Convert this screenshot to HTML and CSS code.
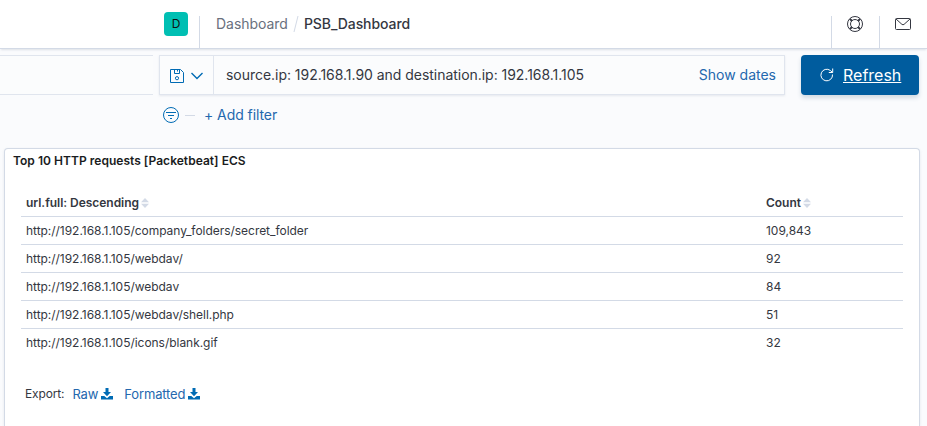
FILE: index.html
```html
<!DOCTYPE html>
<html lang="en">
<head>
<meta charset="utf-8">
<title>PSB_Dashboard</title>
<link rel="stylesheet" href="styles.css">
</head>
<body>
<header class="header">
  <div class="space"><span class="avatar">D</span></div>
  <nav class="crumbs"><span class="crumb">Dashboard</span><svg class="slash" width="6" height="18" viewBox="0 0 6 18"><path d="M5 1 1 17"/></svg><span class="crumb current">PSB_Dashboard</span></nav>
  <div class="action">
    <svg class="icon" width="16" height="16" viewBox="0 0 16 16"><circle cx="8" cy="8" r="7.5"/><circle cx="8" cy="8" r="4.500"/><path class="spokes" d="M2.900 2.900 5 5M13.100 2.900 11 5M2.900 13.100 5 11M13.100 13.100 11 11"/></svg>
  </div>
  <div class="action">
    <svg class="icon" width="16" height="16" viewBox="0 0 16 16"><rect x=".5" y="2.5" width="15" height="11" rx="1"/><path d="m1 3 5.9 5.3a1.6 1.6 0 0 0 2.2 0L15 3"/></svg>
  </div>
</header>
<section class="query">
  <div class="field-end"></div>
  <div class="search">
    <button class="saved">
      <svg class="icon" width="16" height="16" viewBox="0 0 16 16"><path d="M1.5 1.5h10l3 3v10h-13zM5.500 1.500v4h5v-4M8.500 1.500v2"/><circle cx="8" cy="10.200" r="1.600"/></svg>
      <svg class="icon" width="14" height="8" viewBox="0 0 14 8"><path class="chevron" d="m1.500 1 5.500 5.500L12.500 1"/></svg>
    </button>
    <div class="kql"><span>source.ip: 192.168.1.90 and destination.ip: 192.168.1.105</span></div>
    <a class="dates">Show dates</a>
  </div>
  <button class="refresh">
    <svg class="icon" width="14" height="14" viewBox="0 0 14 14"><path d="M12.500 6.500a5.800 5.800 0 1 1-2.300-4.100l2.300 2M12.700.5v4H8.800"/></svg>
    <span>Refresh</span>
  </button>
</section>
<div class="filters">
  <svg class="icon" width="16" height="16" viewBox="0 0 16 16"><circle cx="8" cy="8" r="7.500"/><path d="M3 5.500h10M5 8.500h6M7 11.500h2"/></svg>
  <span class="dash"></span>
  <a class="add">+ Add filter</a>
</div>
<main class="panel">
  <h2 class="title"><span>Top 10 HTTP requests [Packetbeat] ECS</span></h2>
  <table class="table">
    <thead><tr>
      <th class="url"><span>url.full: Descending</span><svg class="sort" width="8" height="10" viewBox="0 0 8 10"><path d="M0 4.200 4 0l4 4.200zM0 5.800 4 10l4-4.200z"/></svg></th>
      <th><span>Count</span><svg class="sort" width="8" height="10" viewBox="0 0 8 10"><path d="M0 4.200 4 0l4 4.200zM0 5.800 4 10l4-4.200z"/></svg></th>
    </tr></thead>
    <tbody>
      <tr><td>http://192.168.1.105/company_folders/secret_folder</td><td>109,843</td></tr>
      <tr><td>http://192.168.1.105/webdav/</td><td>92</td></tr>
      <tr><td>http://192.168.1.105/webdav</td><td>84</td></tr>
      <tr><td>http://192.168.1.105/webdav/shell.php</td><td>51</td></tr>
      <tr><td>http://192.168.1.105/icons/blank.gif</td><td>32</td></tr>
    </tbody>
  </table>
  <div class="export">
    <span class="label">Export:</span>
    <a class="raw">Raw</a><svg class="download" width="12" height="12" viewBox="0 0 12 12"><path d="M4.500 0h3v4H10L6 8.300 2 4h2.500zM0 8h3.300L6 10.200 8.700 8H12v3.500H0z"/></svg>
    <a class="formatted">Formatted</a><svg class="download" width="12" height="12" viewBox="0 0 12 12"><path d="M4.500 0h3v4H10L6 8.300 2 4h2.500zM0 8h3.300L6 10.200 8.700 8H12v3.500H0z"/></svg>
  </div>
</main>
</body>
</html>
```
FILE: styles.css
```css
* { box-sizing: border-box; }
html { overflow: hidden; }
body {
  margin: 0;
  height: 426px;
  overflow: hidden;
  display: flex;
  flex-direction: column;
  background: #fafbfd;
  color: #343741;
  font: 14px/20px Inter, "Liberation Sans", sans-serif;
  letter-spacing: -.035px;
  white-space: nowrap;
}
svg { display: block; flex: none; }
button { border: 0; padding: 0; background: none; font: inherit; color: inherit; }
.icon { fill: none; stroke: currentColor; stroke-width: 1; }
.spokes { stroke-width: 2; }
.header {
  flex: none;
  display: flex;
  align-items: flex-end;
  height: 49px;
  background: #fff;
  border-bottom: 1px solid #d3dae6;
  box-shadow: 0 2px 2px -1px rgba(152, 162, 179, .3);
}
.space { width: 200px; height: 32px; border-right: 1px solid #d3dae6; }
.avatar {
  display: block;
  width: 24px;
  height: 24px;
  margin: -4px 0 0 164px;
  border-radius: 4px;
  background: #00bfb3;
  color: #111;
  font-size: 12px;
  line-height: 24px;
  text-align: center;
}
.crumbs { flex: 1; display: flex; align-items: center; height: 48px; padding-left: 16px; }
.crumb { color: #69707d; }
.current { color: #343741; font-weight: 500; letter-spacing: -.08px; }
.slash { margin: 0 5px; fill: none; stroke: #d3dae6; }
.action {
  width: 48px;
  height: 32px;
  padding-left: 15px;
  border-left: 1px solid #d3dae6;
}
.query { flex: none; display: flex; height: 40px; margin-top: 6px; }
.field-end {
  width: 153px;
  margin-right: 6px;
  border: solid #e0e5ee;
  border-width: 1px 0;
  background: #fbfcfd;
}
.search {
  display: flex;
  align-items: center;
  width: 626px;
  border: 1px solid #e0e5ee;
  background: #fbfcfd;
  box-shadow: 0 1px 2px rgba(152, 162, 179, .2);
}
.saved {
  display: flex;
  align-items: center;
  gap: 5px;
  width: 54px;
  height: 38px;
  padding: 2px 0 0 9px;
  border-right: 1px solid #e0e5ee;
  color: #006bb4;
}
.chevron { stroke-width: 1.4; }
.kql { flex: 1; padding-left: 12px; }
.dates { color: #2468ae; margin-right: 8px; letter-spacing: 0; }
.refresh {
  display: flex;
  align-items: center;
  gap: 9px;
  width: 118px;
  margin-left: 16px;
  padding-left: 19px;
  border-radius: 4px;
  background: #005c9e;
  color: #fff;
  font-size: 16px;
  text-decoration: underline;
  box-shadow: 0 3px 4px rgba(54, 97, 126, .2);
}
.filters {
  flex: none;
  display: flex;
  align-items: center;
  height: 40px;
  padding-left: 163px;
  color: #006bb4;
}
.dash { width: 10px; height: 1px; margin: 0 9px 0 6px; background: #d3dae6; }
.add { color: #2468ae; letter-spacing: -.07px; }
.panel {
  flex: none;
  width: 916px;
  height: 278px;
  margin: 13px 0 0 4px;
  border: 1px solid #d3dae6;
  border-bottom: 0;
  border-radius: 4px 4px 0 0;
  background: #fff;
  box-shadow: 0 1px 3px rgba(152, 162, 179, .2);
  font-size: 12px;
}
.title { margin: 2px 0 0 8px; font-size: 12px; line-height: 20px; font-weight: 600; color: #1a1c21; letter-spacing: .03px; }
.table { width: 882px; margin: 17px 0 0 16px; border-collapse: collapse; table-layout: fixed; }
.table th, .table td { height: 28px; padding: 1px 5px 0; text-align: left; line-height: 20px; }
.table thead tr, .table tbody tr { border-bottom: 1px solid #d3dae6; }
.table tbody tr:last-child { border-bottom: 0; }
.table th { padding-top: 3px; font-weight: 600; }
.url { width: 740px; }
.sort { display: inline-block; margin-left: 2px; vertical-align: -1px; fill: #d3dae6; }
.export { display: flex; align-items: center; height: 20px; margin: 28px 0 0 20px; }
.label { margin-right: 8px; letter-spacing: -.14px; }
.raw, .formatted { color: #2468ae; font-size: 13px; letter-spacing: -.14px; }
.download { margin: 0 11px 0 3px; fill: #006bb4; }
```
